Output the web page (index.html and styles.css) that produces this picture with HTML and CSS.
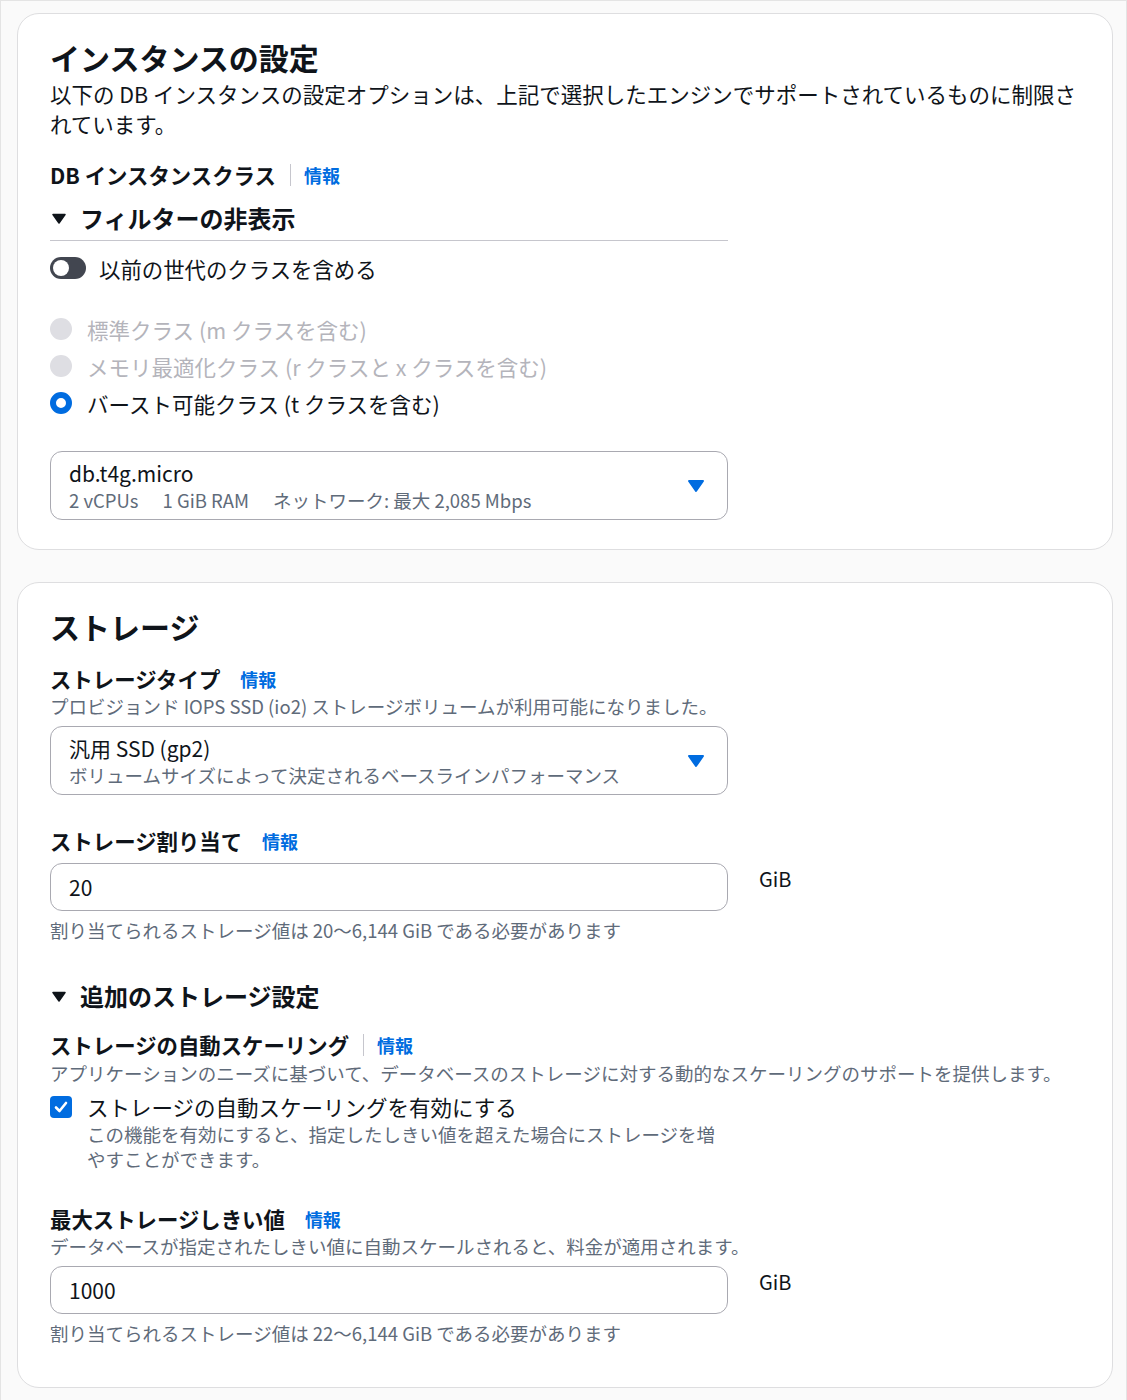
FILE: index.html
```html
<!DOCTYPE html>
<html lang="ja">
<head>
<meta charset="utf-8">
<title>インスタンスの設定</title>
<link rel="stylesheet" href="styles.css">
</head>
<body>
<div class="frame">
  <section class="card card-instance">
    <h2 class="card-title">インスタンスの設定</h2>
    <p class="card-desc">以下の DB インスタンスの設定オプションは、上記で選択したエンジンでサポートされているものに制限されています。</p>

    <div class="label-row label-db">
      <span class="label">DB インスタンスクラス</span>
      <span class="divider"></span>
      <a class="info">情報</a>
    </div>

    <div class="expander filter-head">
      <svg class="caret" width="14" height="11" viewBox="0 0 14 11"><path d="M1 1.5 H13 L7 10 Z" fill="#0f141a" stroke="#0f141a" stroke-width="1.5" stroke-linejoin="round"/></svg>
      <span>フィルターの非表示</span>
    </div>

    <div class="toggle-row">
      <span class="toggle"><span class="knob"></span></span>
      <span class="toggle-text">以前の世代のクラスを含める</span>
    </div>

    <div class="radios">
      <div class="radio-row disabled">
        <span class="radio"></span>
        <span>標準クラス (m クラスを含む)</span>
      </div>
      <div class="radio-row disabled">
        <span class="radio"></span>
        <span>メモリ最適化クラス (r クラスと x クラスを含む)</span>
      </div>
      <div class="radio-row">
        <span class="radio checked"></span>
        <span>バースト可能クラス (t クラスを含む)</span>
      </div>
    </div>

    <div class="select select-class">
      <div class="select-body">
        <div class="select-main">db.t4g.micro</div>
        <div class="select-sub"><span class="tag">2 vCPUs</span><span class="tag">1 GiB RAM</span><span class="tag">ネットワーク: 最大 2,085 Mbps</span></div>
      </div>
      <svg class="select-caret" width="18" height="14" viewBox="0 0 18 14"><path d="M2 2 H16 L9 12 Z" fill="#006ce0" stroke="#006ce0" stroke-width="2" stroke-linejoin="round"/></svg>
    </div>
  </section>

  <section class="card card-storage">
    <h2 class="card-title">ストレージ</h2>

    <div class="label-row label-type">
      <span class="label">ストレージタイプ</span>
      <a class="info info-gap">情報</a>
    </div>
    <p class="hint">プロビジョンド IOPS SSD (io2) ストレージボリュームが利用可能になりました。</p>
    <div class="select select-type">
      <div class="select-body">
        <div class="select-main">汎用 SSD (gp2)</div>
        <div class="select-sub">ボリュームサイズによって決定されるベースラインパフォーマンス</div>
      </div>
      <svg class="select-caret" width="18" height="14" viewBox="0 0 18 14"><path d="M2 2 H16 L9 12 Z" fill="#006ce0" stroke="#006ce0" stroke-width="2" stroke-linejoin="round"/></svg>
    </div>

    <div class="label-row label-alloc">
      <span class="label">ストレージ割り当て</span>
      <a class="info info-gap">情報</a>
    </div>
    <div class="input-row">
      <div class="input">20</div>
      <span class="unit">GiB</span>
    </div>
    <p class="hint hint-after">割り当てられるストレージ値は 20〜6,144 GiB である必要があります</p>

    <div class="expander extra-head">
      <svg class="caret" width="14" height="11" viewBox="0 0 14 11"><path d="M1 1.5 H13 L7 10 Z" fill="#0f141a" stroke="#0f141a" stroke-width="1.5" stroke-linejoin="round"/></svg>
      <span>追加のストレージ設定</span>
    </div>

    <div class="label-row label-auto">
      <span class="label">ストレージの自動スケーリング</span>
      <span class="divider"></span>
      <a class="info">情報</a>
    </div>
    <p class="hint hint-auto">アプリケーションのニーズに基づいて、データベースのストレージに対する動的なスケーリングのサポートを提供します。</p>
    <div class="check-row">
      <span class="checkbox"><svg width="22" height="22" viewBox="0 0 22 22"><path d="M6 11.5 L9.5 15 L16 7" fill="none" stroke="#fff" stroke-width="2.6" stroke-linecap="round" stroke-linejoin="round"/></svg></span>
      <div class="check-text">
        <div class="check-label">ストレージの自動スケーリングを有効にする</div>
        <div class="check-desc">この機能を有効にすると、指定したしきい値を超えた場合にストレージを増やすことができます。</div>
      </div>
    </div>

    <div class="label-row label-max">
      <span class="label">最大ストレージしきい値</span>
      <a class="info info-gap">情報</a>
    </div>
    <p class="hint">データベースが指定されたしきい値に自動スケールされると、料金が適用されます。</p>
    <div class="input-row input-max">
      <div class="input">1000</div>
      <span class="unit">GiB</span>
    </div>
    <p class="hint hint-after">割り当てられるストレージ値は 22〜6,144 GiB である必要があります</p>
  </section>
</div>
</body>
</html>
```

FILE: styles.css
```css
* { box-sizing: border-box; }
html, body { margin: 0; padding: 0; }
body {
  background: #fafafa;
  font-family: "Noto Sans CJK JP", "Noto Sans", sans-serif;
  color: #0f141a;
}
.frame {
  width: 1127px;
  min-height: 1400px;
  border: 1px solid #e4e4e4;
  padding: 12px 13px 12px 16px;
}
.card {
  background: #fff;
  border: 1px solid #dedee0;
  border-radius: 22px;
  padding: 25px 32px 29px 32px;
}
.card-storage {
  margin-top: 32px;
  padding-bottom: 41px;
}
.card-title {
  margin: 0;
  font-size: 30px;
  line-height: 36px;
  font-weight: 700;
}
.card-desc {
  margin: 4px 0 0;
  font-size: 21.5px;
  line-height: 30px;
}
.label-row {
  display: flex;
  align-items: center;
  height: 28px;
}
.label {
  font-size: 21.4px;
  font-weight: 700;
  line-height: 28px;
}
.divider {
  width: 1px;
  height: 22px;
  background: #c6c6cd;
  margin: 0 13px 0 14px;
}
.info {
  color: #006ce0;
  font-size: 18px;
  font-weight: 700;
  line-height: 28px;
}
.info-gap { margin-left: 20px; }
.label-db { margin-top: 22px; }
.expander {
  display: flex;
  align-items: center;
  font-size: 24px;
  font-weight: 700;
  line-height: 32px;
}
.caret { margin: 0 14px 0 2px; }
.filter-head {
  margin-top: 13px;
  width: 678px;
  padding-bottom: 6px;
  border-bottom: 1px solid #c6c6cd;
}
.toggle-row {
  margin-top: 12px;
  display: flex;
  align-items: center;
  height: 30px;
  font-size: 21.4px;
}
.toggle {
  width: 36px;
  height: 22px;
  border-radius: 11px;
  background: #424650;
  display: flex;
  align-items: center;
  padding-left: 3px;
  margin-right: 13px;
}
.knob {
  width: 16px;
  height: 16px;
  border-radius: 50%;
  background: #fff;
}
.radios {
  margin-top: 31px;
  display: flex;
  flex-direction: column;
  gap: 7px;
}
.radio-row {
  display: flex;
  align-items: center;
  height: 30px;
  font-size: 21.5px;
}
.radio-row.disabled { color: #b4b4bb; }
.radio {
  width: 22px;
  height: 22px;
  border-radius: 50%;
  background: #dedee3;
  margin-right: 15px;
  flex: none;
}
.radio.checked {
  background: #fff;
  border: 6px solid #006ce0;
}
.select {
  width: 678px;
  border: 1px solid #a9a9b1;
  border-radius: 12px;
  display: flex;
  align-items: center;
  padding: 8px 22px 5px 18px;
}
.select-class { margin-top: 33px; }
.select-type { margin-top: 7px; }
.select-body { flex: 1; }
.select-main {
  font-size: 21px;
  line-height: 26px;
}
.select-sub {
  font-size: 18.5px;
  line-height: 28px;
  color: #5f6b7a;
}
.tag { margin-right: 24px; }
.select-caret { flex: none; margin-top: -2px; }
.hint {
  margin: 0;
  font-size: 18.5px;
  line-height: 26px;
  color: #5f6b7a;
}
.label-type { margin-top: 21px; }
.label-alloc { margin-top: 32px; }
.input-row {
  margin-top: 8px;
  display: flex;
  align-items: flex-start;
}
.input {
  width: 678px;
  height: 48px;
  border: 1px solid #a9a9b1;
  border-radius: 12px;
  padding: 0 18px;
  font-size: 21px;
  line-height: 46px;
}
.unit {
  margin: 2px 0 0 31px;
  font-size: 20px;
  line-height: 28px;
}
.hint-after { margin-top: 6px; }
.extra-head { margin-top: 37px; }
.label-auto { margin-top: 19px; }
.hint-auto { margin-top: 1px; }
.check-row {
  margin-top: 6px;
  display: flex;
  align-items: flex-start;
}
.checkbox {
  width: 22px;
  height: 22px;
  border-radius: 4px;
  background: #006ce0;
  margin: 4px 15px 0 0;
  flex: none;
  display: flex;
}
.check-text { width: 640px; }
.check-label {
  font-size: 21.5px;
  line-height: 30px;
}
.check-desc {
  font-size: 18.5px;
  line-height: 25px;
  color: #5f6b7a;
}
.label-max { margin-top: 33px; }
.input-max { margin-top: 7px; }
```
